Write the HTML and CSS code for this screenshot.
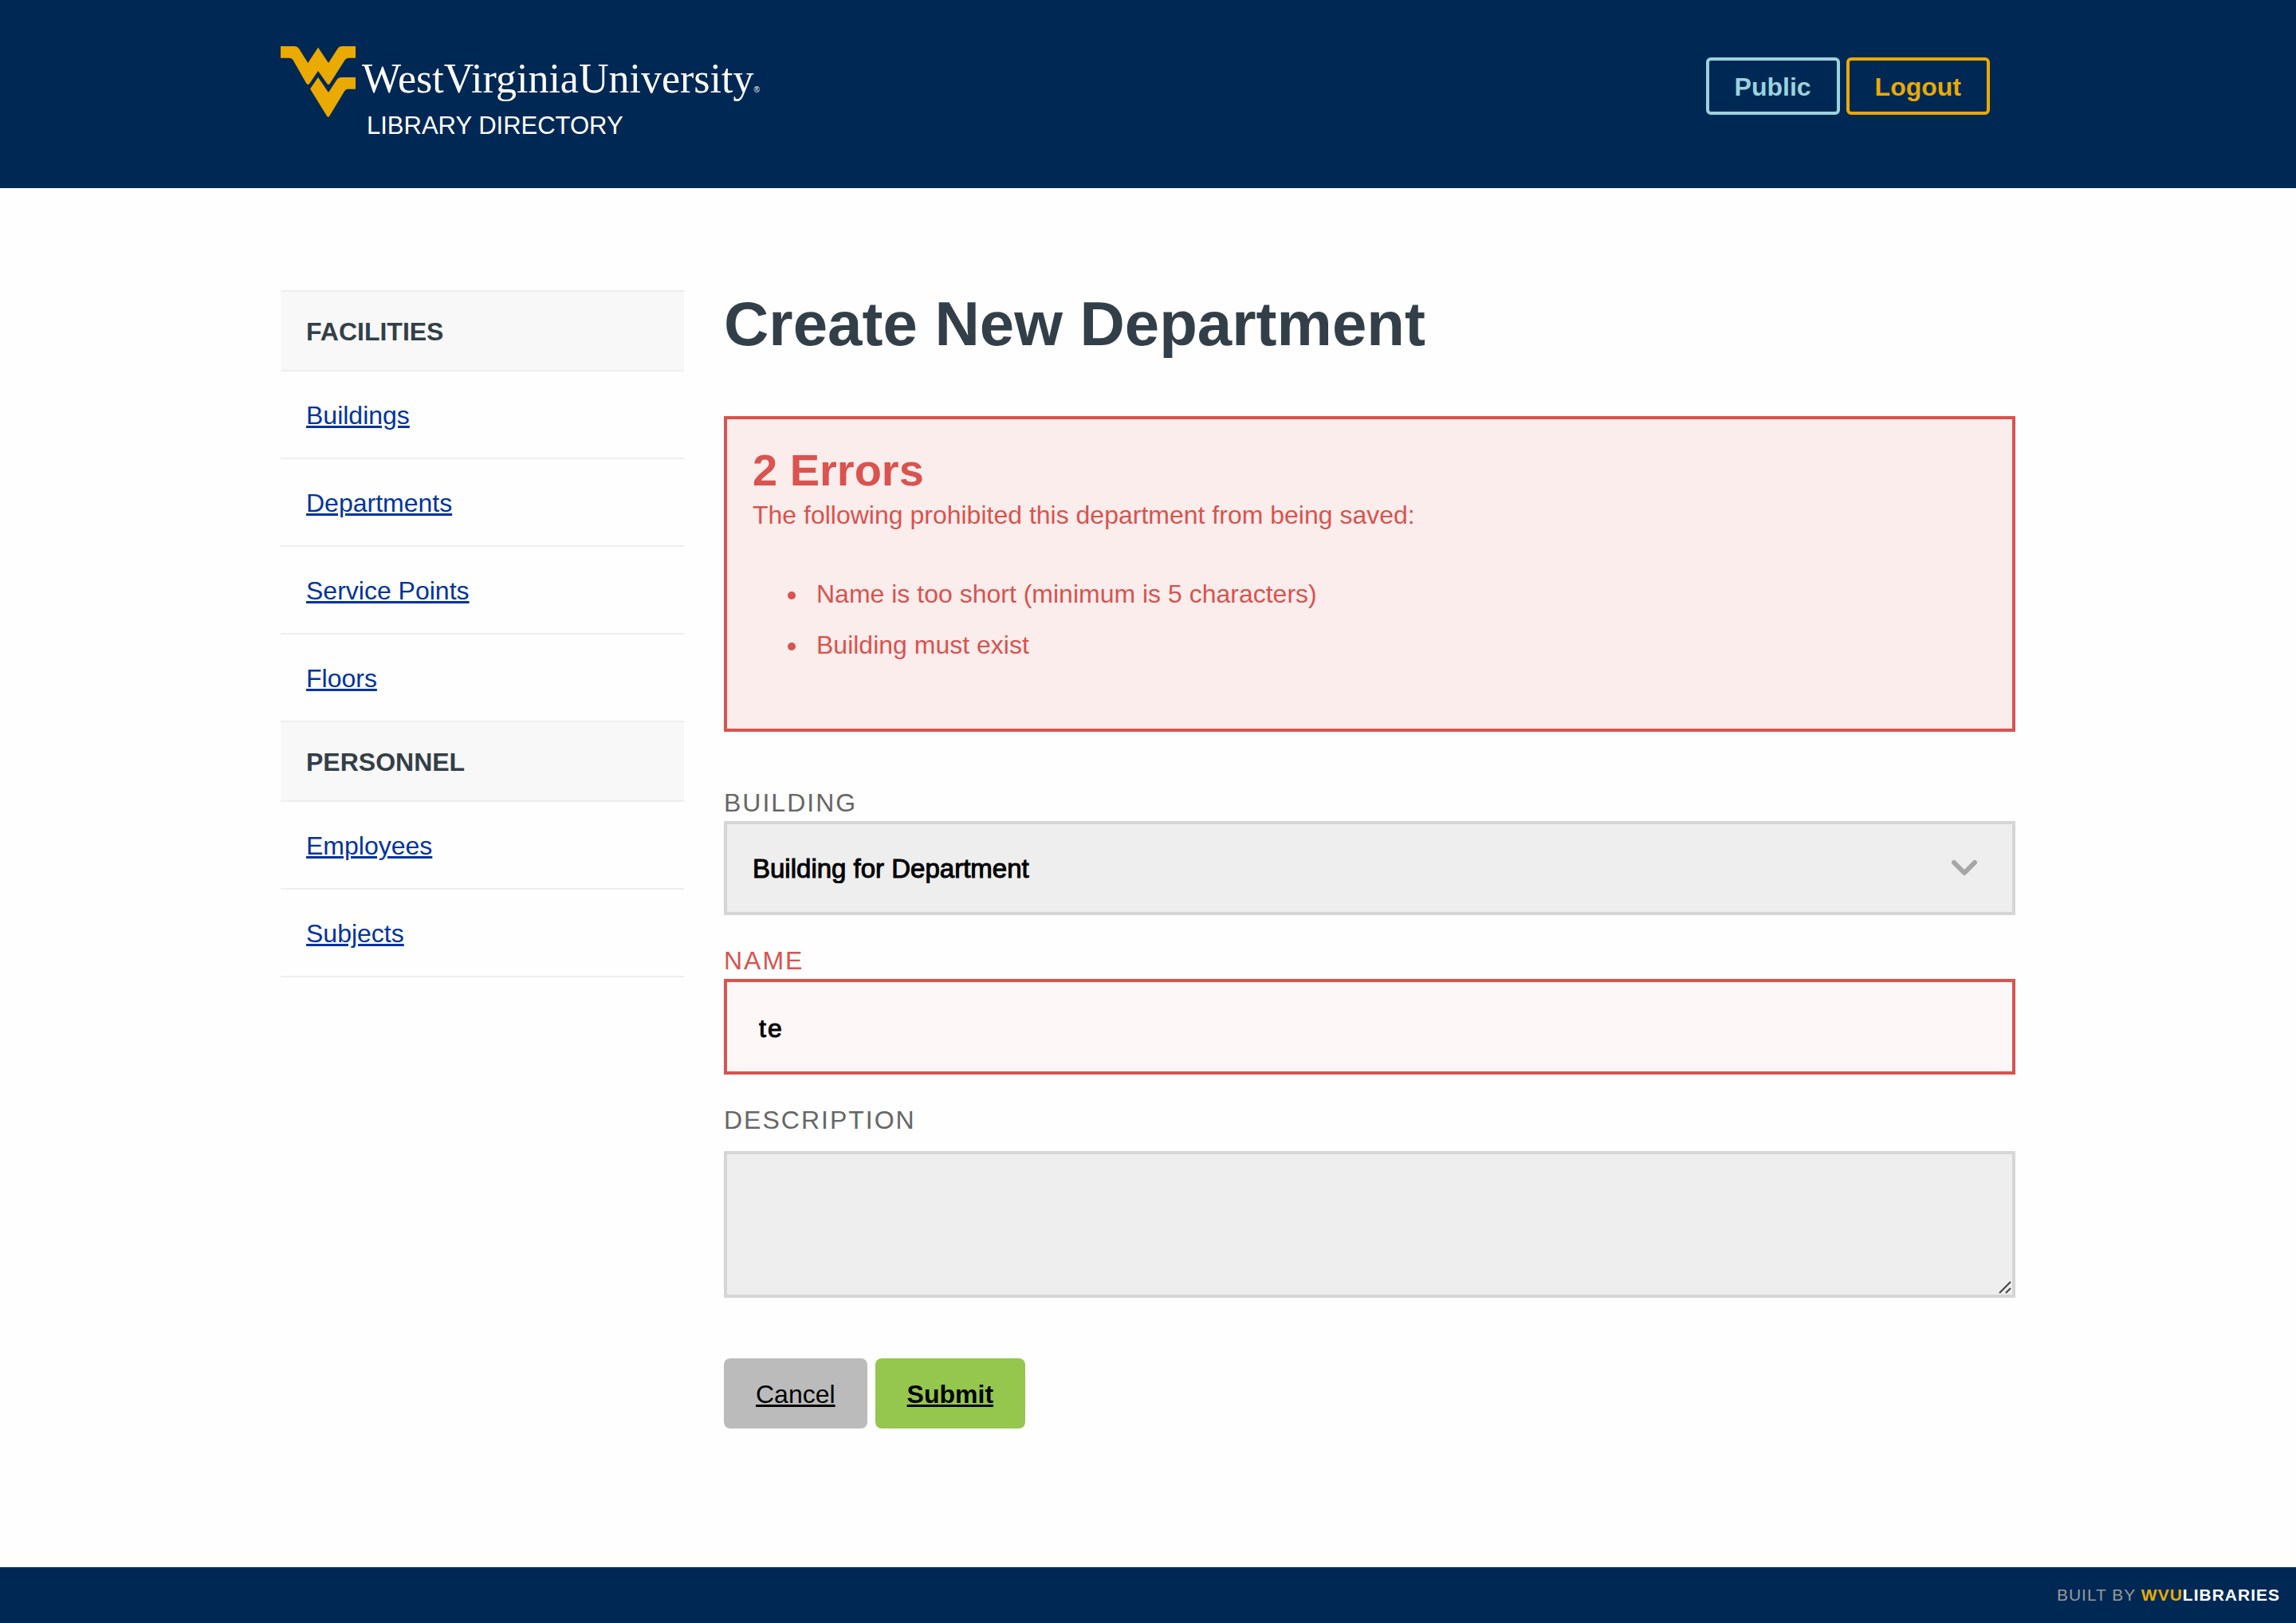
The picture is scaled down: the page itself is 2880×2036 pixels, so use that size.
FILE: index.html
```html
<!DOCTYPE html>
<html lang="en">
<head>
  <meta charset="utf-8">
  <meta name="viewport" content="width=device-width, initial-scale=1">
  <title>Create New Department | WVU Library Directory</title>
  <link rel="stylesheet" href="styles.css">
</head>
<body>
  <header class="site-header">
    <div class="container site-header-inner">
      <div class="brand">
        <svg class="brand-mark" width="94" height="90" viewBox="0 0 94 90" aria-hidden="true">
          <path d="M0 0H17Q21 0 23 3L34.300 21L47 1.500L60 21L71.500 3Q73.500 0 77 0H94V14.700H85Q82 14.700 80.500 17.500L62 46.500Q60 49.500 58 46.500L47 31L36.500 46.500Q34.300 49.500 32.200 46.500L16 18Q14 14.700 10.500 14.700H0Z"/>
          <path d="M47 39L60 58L70.500 42Q72.500 39 76 39H94V53.700H84Q81.500 53.700 80 56.500L61.300 87.500Q59.700 90 58 87.500L37 53.500Z"/>
        </svg>
        <div class="brand-text">
          <div class="wordmark">WestVirginiaUniversity<span class="reg">®</span></div>
          <div class="site-name">LIBRARY DIRECTORY</div>
        </div>
      </div>
      <nav class="account" aria-label="Account">
        <a class="pill pill-public" href="#">Public</a>
        <a class="pill pill-logout" href="#">Logout</a>
      </nav>
    </div>
  </header>

  <div class="container layout">
    <nav class="sidebar" aria-label="Directory">
      <h2 class="sidebar-title">FACILITIES</h2>
      <ul class="sidebar-list">
        <li><a href="#">Buildings</a></li>
        <li><a href="#">Departments</a></li>
        <li><a href="#">Service Points</a></li>
        <li><a href="#">Floors</a></li>
      </ul>
      <h2 class="sidebar-title">PERSONNEL</h2>
      <ul class="sidebar-list">
        <li><a href="#">Employees</a></li>
        <li><a href="#">Subjects</a></li>
      </ul>
    </nav>

    <main class="content">
      <h1>Create New Department</h1>

      <section class="errors">
        <h2>2 Errors</h2>
        <p>The following prohibited this department from being saved:</p>
        <ul>
          <li>Name is too short (minimum is 5 characters)</li>
          <li>Building must exist</li>
        </ul>
      </section>

      <form class="form">
        <div class="field">
          <label for="building">BUILDING</label>
          <div class="control">
            <select id="building">
              <option>Building for Department</option>
            </select>
            <svg class="chevron" width="34" height="22" viewBox="0 0 34 22" aria-hidden="true">
              <path d="M4 4L17 17L30 4"/>
            </svg>
          </div>
        </div>
        <div class="field field-error">
          <label for="name">NAME</label>
          <input id="name" type="text" value="te">
        </div>
        <div class="field field-area">
          <label for="description">DESCRIPTION</label>
          <div class="control">
            <textarea id="description"></textarea>
            <svg class="grip" width="16" height="16" viewBox="0 0 16 16" aria-hidden="true">
              <path d="M1 15L15 1M9 15L15 9"/>
            </svg>
          </div>
        </div>
        <div class="actions">
          <a class="button button-cancel" href="#">Cancel</a>
          <button class="button button-submit" type="submit">Submit</button>
        </div>
      </form>
    </main>
  </div>

  <footer class="site-footer">BUILT BY <a href="#"><span class="gold">WVU</span>LIBRARIES</a></footer>
</body>
</html>
```
FILE: styles.css
```css
* {
  box-sizing: border-box;
}

body {
  display: flex;
  flex-direction: column;
  min-height: 100vh;
  margin: 0;
  background: #fefefe;
  color: #333f48;
  font: 32px/36px "Liberation Sans", Arial, sans-serif;
}

h1,
h2,
p,
ul {
  margin: 0;
}

.container {
  width: 100%;
  max-width: 2240px;
  margin: 0 auto;
  padding-right: 32px;
  padding-left: 32px;
}

/* Header */

.site-header {
  padding: 58px 0 60px;
  background: #002855;
}

.site-header-inner {
  display: flex;
  align-items: flex-start;
  justify-content: space-between;
}

.brand {
  display: flex;
  gap: 8px;
  color: #fff;
}

.brand-mark {
  flex: none;
  fill: #eaaa00;
}

.wordmark {
  font: 52px/82px "Liberation Serif", "Times New Roman", serif;
}

.reg {
  font: 10px/10px "Liberation Sans", Arial, sans-serif;
}

.site-name {
  padding-left: 6px;
  font-size: 31px;
}

.account {
  display: flex;
  gap: 8px;
  padding: 14px 32px 0 0;
}

.pill {
  padding: 15px 32px 13px;
  border: 4px solid;
  border-radius: 6px;
  font-weight: bold;
  text-decoration: none;
}

.pill-public {
  color: #9bd3dd;
}

.pill-logout {
  color: #eaaa00;
}

/* Two columns */

.layout {
  display: grid;
  flex: 1 0 auto;
  grid-template-columns: minmax(0, 506fr) minmax(0, 1620fr);
  align-items: start;
  gap: 50px;
  padding-top: 128px;
  padding-bottom: 128px;
}

.sidebar {
  border-top: 2px solid #eee;
}

.sidebar-title {
  padding: 32px 32px 30px;
  border-bottom: 2px solid #eee;
  background: #f8f8f8;
  font-size: 32px;
}

.sidebar-list {
  padding: 0;
  list-style: none;
}

.sidebar-list li {
  padding: 37px 32px 35px;
  border-bottom: 2px solid #eee;
}

.sidebar-list a {
  color: #0033a0;
}

h1 {
  margin-bottom: 74px;
  font-size: 78px;
  line-height: 84px;
}

/* Error summary */

.errors {
  margin-bottom: 66px;
  padding: 32px;
  border: 4px solid #d9534f;
  background: #fbedec;
  color: #d9534f;
}

.errors h2 {
  font-size: 56px;
  line-height: 64px;
}

.errors p {
  line-height: 48px;
}

.errors ul {
  margin: 43px 0 41px;
  padding-left: 70px;
  line-height: 64px;
}

.errors li {
  padding-left: 10px;
}

/* Form */

.form {
  display: flex;
  flex-direction: column;
  gap: 34px;
}

.field label {
  display: block;
  color: #666;
  letter-spacing: 2px;
  line-height: 46px;
}

.control {
  position: relative;
}

select,
input,
textarea {
  display: block;
  width: 100%;
  margin: 0;
  border: 4px solid #d5d5d5;
  border-radius: 0;
  background: #eee;
  color: #000;
  font: inherit;
  -webkit-text-stroke: 1px #000;
}

select {
  height: 118px;
  padding: 2px 32px 0;
  font-size: 33px;
  appearance: none;
}

input {
  height: 120px;
  padding: 4px 40px 0;
  letter-spacing: 2px;
}

textarea {
  height: 184px;
  padding: 32px 40px;
  resize: none;
}

.field-error label {
  color: #d9534f;
}

.field-error input {
  border-color: #d9534f;
  background: #fdf7f7;
}

.field-area label {
  margin-bottom: 16px;
}

.chevron,
.grip {
  position: absolute;
  fill: none;
  pointer-events: none;
}

.chevron {
  top: 48px;
  right: 47px;
  stroke: #a6a6a6;
  stroke-linecap: round;
  stroke-linejoin: round;
  stroke-width: 6px;
}

.grip {
  right: 5px;
  bottom: 5px;
  stroke: #444;
  stroke-width: 2px;
}

.actions {
  display: flex;
  gap: 10px;
  padding-top: 42px;
}

.button {
  padding: 27px 40px 25px;
  border: 0;
  border-radius: 8px;
  color: #000;
  font: inherit;
  text-decoration: underline;
}

.button-cancel {
  background: #bbb;
}

.button-submit {
  background: #95c64d;
  font-weight: bold;
}

/* Footer */

.site-footer {
  padding: 17px 20px;
  background: #002855;
  color: #999;
  font-size: 21px;
  letter-spacing: 1px;
  text-align: right;
}

.site-footer a {
  color: #fff;
  font-weight: bold;
  text-decoration: none;
}

.site-footer .gold {
  color: #eaaa00;
}
```
